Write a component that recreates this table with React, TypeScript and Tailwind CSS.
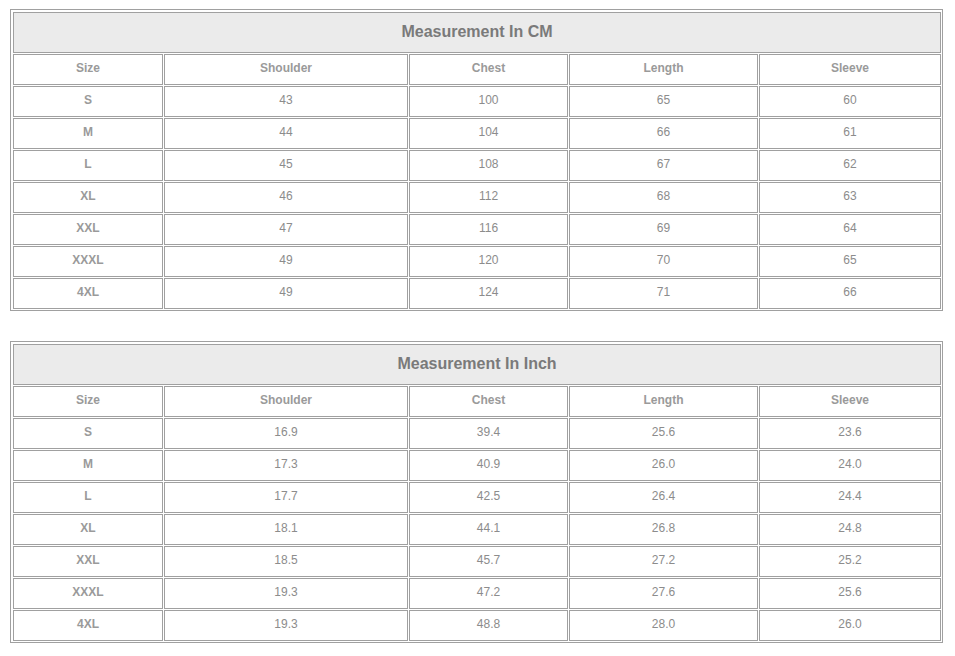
const columns = ['Size', 'Shoulder', 'Chest', 'Length', 'Sleeve']
const widths = ['w-[150px]', 'w-[244px]', 'w-[159px]', 'w-[189px]', 'w-[182px]']

const cmRows = [
  ['S', '43', '100', '65', '60'],
  ['M', '44', '104', '66', '61'],
  ['L', '45', '108', '67', '62'],
  ['XL', '46', '112', '68', '63'],
  ['XXL', '47', '116', '69', '64'],
  ['XXXL', '49', '120', '70', '65'],
  ['4XL', '49', '124', '71', '66'],
]

const inchRows = [
  ['S', '16.9', '39.4', '25.6', '23.6'],
  ['M', '17.3', '40.9', '26.0', '24.0'],
  ['L', '17.7', '42.5', '26.4', '24.4'],
  ['XL', '18.1', '44.1', '26.8', '24.8'],
  ['XXL', '18.5', '45.7', '27.2', '25.2'],
  ['XXXL', '19.3', '47.2', '27.6', '25.6'],
  ['4XL', '19.3', '48.8', '28.0', '26.0'],
]

function SizeTable({ title, rows }: { title: string; rows: string[][] }) {
  return (
    <div className="w-[933px] border border-[#a0a0a0] pt-[2px] pl-[2px] pr-px pb-px">
      <div className="grid grid-cols-[150px_244px_159px_189px_182px] gap-px">
        {/* заголовок таблицы */}
        <div className="col-span-5 h-[41px] pb-[2px] border border-[#a0a0a0] bg-[#ebebeb] flex items-center justify-center text-[16px] font-bold text-[#7a7a7a]">
          {title}
        </div>

        {/* названия колонок */}
        {columns.map((c, i) => (
          <div
            key={c}
            className={`${widths[i]} h-[31px] pb-[4px] border border-[#a0a0a0] flex items-center justify-center text-[12px] font-bold text-[#9a9a9a]`}
          >
            {c}
          </div>
        ))}

        {/* данные */}
        {rows.map((row) =>
          row.map((v, i) => (
            <div
              key={row[0] + i}
              className={`${widths[i]} h-[31px] pb-[4px] border border-[#a0a0a0] flex items-center justify-center text-[12px] ${
                i === 0 ? 'font-bold text-[#9a9a9a]' : 'text-[#8c8c8c]'
              }`}
            >
              {v}
            </div>
          ))
        )}
      </div>
    </div>
  )
}

export default function App() {
  return (
    <div
      className="min-h-screen bg-white pt-[9px] pl-[10px]"
      style={{ fontFamily: '"Liberation Sans", Arial, sans-serif' }}
    >
      <SizeTable title="Measurement In CM" rows={cmRows} />
      <div className="h-[30px]" />
      <SizeTable title="Measurement In Inch" rows={inchRows} />
    </div>
  )
}
